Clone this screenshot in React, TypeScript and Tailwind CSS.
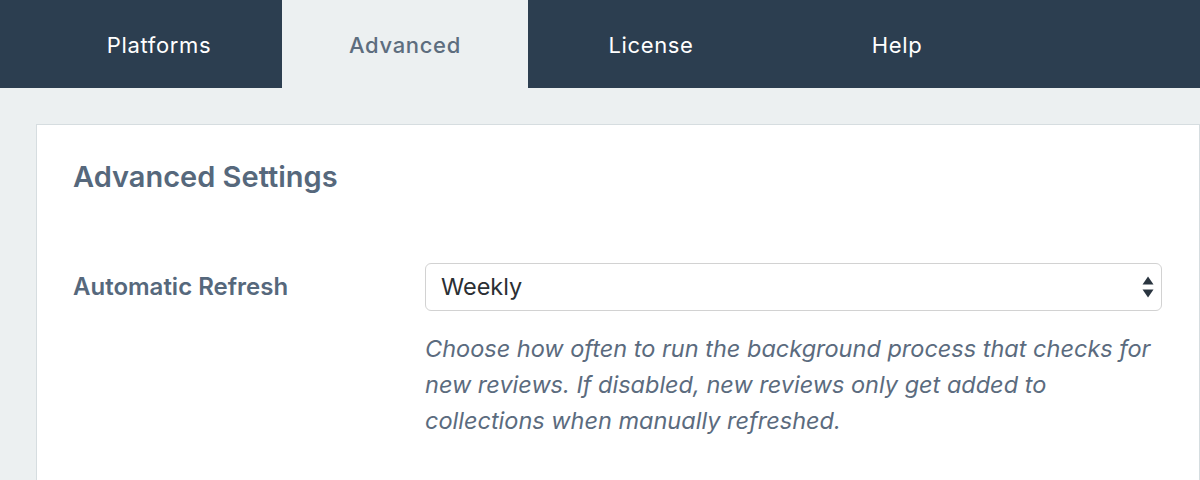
const tabs = ["Platforms", "Advanced", "License", "Help"];

function SelectArrows() {
  return (
    <svg width="12" height="22" viewBox="0 0 12 22" className="absolute right-[7px] top-[12px]">
      <path d="M6 0.5 L11.5 8.5 L0.5 8.5 Z" fill="#2a3540" />
      <path d="M0.5 13.5 L11.5 13.5 L6 21.5 Z" fill="#2a3540" />
    </svg>
  );
}

export default function App() {
  return (
    <div className="h-[480px] w-[1200px] overflow-hidden bg-[#ecf0f1] font-['Inter','Liberation_Sans',sans-serif]">
      {/* TABS */}
      <nav className="flex h-[88px] bg-[#2c3e50] pl-[36px]">
        {tabs.map((tab) => (
          <div
            key={tab}
            className={
              tab === "Advanced"
                ? "flex w-[246px] items-center justify-center bg-[#ecf0f1] pt-[2px] text-[22px] font-medium tracking-[0.03em] text-[#5d6d7e]"
                : "flex w-[246px] items-center justify-center pt-[2px] text-[22px] tracking-[0.03em] text-white"
            }
          >
            {tab}
          </div>
        ))}
      </nav>

      {/* CARD */}
      <div className="ml-[36px] mt-[36px] h-[400px] border border-[#d6dde0] bg-white pl-[36px] pt-[34px]">
        <h2 className="text-[29px] font-semibold leading-[36px] text-[#56687c]">
          Advanced Settings
        </h2>

        <div className="mt-[68px] flex">
          <label className="w-[352px] pt-[10px] text-[24px] font-semibold leading-[28px] text-[#56687c]">
            Automatic Refresh
          </label>

          <div className="w-[737px]">
            <div className="relative flex h-[48px] items-center rounded-[6px] border border-[#d2d2d2] bg-white pl-[15px] text-[23.5px] text-[#2b2f33]">
              Weekly
              <SelectArrows />
            </div>
            <p className="mt-[20px] text-[23.5px] italic leading-[36px] text-[#5b6b7e]">
              Choose how often to run the background process that checks for new reviews. If disabled, new reviews only get added to collections when manually refreshed.
            </p>
          </div>
        </div>
      </div>
    </div>
  );
}
